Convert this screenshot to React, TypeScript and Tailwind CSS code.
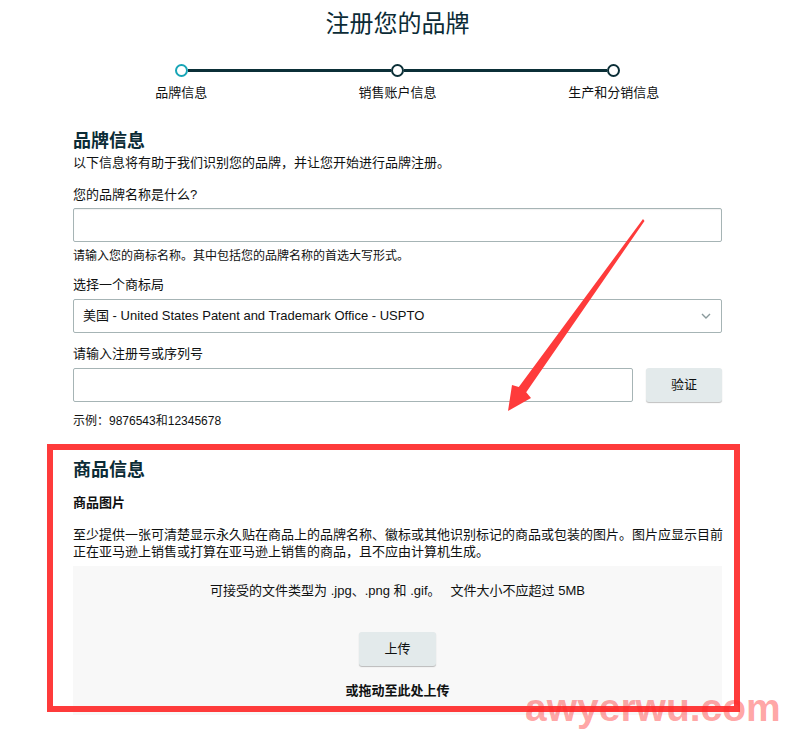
import React from "react";

const FONT = { fontFamily: '"Liberation Sans", "Noto Sans CJK SC", sans-serif' };

function Step({ label, pos }: { label: string; pos: "first" | "mid" | "last" }) {
  return (
    <div className="flex flex-col items-center">
      <div className="flex h-[16px] w-full items-center">
        <div className={`h-[3px] flex-1 ${pos === "first" ? "bg-transparent" : "bg-[#0b2f37]"}`} />
        <div
          className={`h-[13px] w-[13px] shrink-0 rounded-full border-[2.5px] bg-white ${
            pos === "first" ? "border-[#17a5b6]" : "border-[#0b2f37]"
          }`}
        />
        <div className={`h-[3px] flex-1 ${pos === "last" ? "bg-transparent" : "bg-[#0b2f37]"}`} />
      </div>
      <div className="mt-[6px] h-[18px] text-[13px] leading-[18px] text-[#0f1111]">{label}</div>
    </div>
  );
}

function Input() {
  return <div className="h-[34px] w-full rounded-[2px] border border-[#a6b4b5] bg-white shadow-[inset_0_1px_1px_rgba(0,0,0,0.06)]" />;
}

export default function App() {
  return (
    <div className="relative h-[739px] w-[801px] overflow-hidden bg-white" style={FONT}>
      <div className="ml-[73px] w-[649px]">
        <div className="h-[48px] text-center text-[24px] leading-[48px] text-[#0b2b36]">注册您的品牌</div>

        <div className="mt-[14px] grid grid-cols-3">
          <Step label="品牌信息" pos="first" />
          <Step label="销售账户信息" pos="mid" />
          <Step label="生产和分销信息" pos="last" />
        </div>

        <div className="mt-[27px] h-[24px] text-[18px] font-bold leading-[24px] text-[#0b2b36]">品牌信息</div>
        <div className="mt-[1px] h-[18px] text-[13px] leading-[18px] text-[#0f1111]">
          以下信息将有助于我们识别您的品牌，并让您开始进行品牌注册。
        </div>

        <div className="mt-[14px] h-[18px] text-[13px] leading-[18px] text-[#0f1111]">您的品牌名称是什么?</div>
        <div className="mt-[4px]">
          <Input />
        </div>
        <div className="mt-[5px] h-[18px] text-[12px] leading-[18px] text-[#0f1111]">
          请输入您的商标名称。其中包括您的品牌名称的首选大写形式。
        </div>

        <div className="mt-[11px] h-[18px] text-[13px] leading-[18px] text-[#0f1111]">选择一个商标局</div>
        <div className="mt-[5px] flex h-[34px] items-center justify-between rounded-[2px] border border-[#a6b4b5] bg-white pl-[9px] pr-[8px]">
          <span className="text-[13px] text-[#0f1111]">美国 - United States Patent and Trademark Office - USPTO</span>
          <svg width="12" height="8" viewBox="0 0 12 8" className="mr-[1px]">
            <path d="M2 2 L6 6 L10 2" fill="none" stroke="#8a9a9c" strokeWidth="1.4" />
          </svg>
        </div>

        <div className="mt-[12px] h-[18px] text-[13px] leading-[18px] text-[#0f1111]">请输入注册号或序列号</div>
        <div className="mt-[5px] flex gap-[13px]">
          <div className="h-[34px] w-[561px] rounded-[2px] border border-[#a6b4b5] bg-white" />
          <button className="h-[34px] w-[76px] rounded-[3px] bg-[#e3eaeb] text-[13px] text-[#0f1111] shadow-[0_1px_1px_rgba(0,0,0,0.25)]">
            验证
          </button>
        </div>
        <div className="mt-[10px] h-[18px] text-[12px] leading-[18px] text-[#0f1111]">示例：9876543和12345678</div>

        <div className="mt-[28px] h-[24px] text-[18px] font-bold leading-[24px] text-[#0b2b36]">商品信息</div>
        <div className="mt-[12px] h-[18px] text-[13px] font-bold leading-[18px] text-[#0f1111]">商品图片</div>
        <div className="mt-[14px] w-[651px] text-[13px] leading-[17px] text-[#0f1111]">
          至少提供一张可清楚显示永久贴在商品上的品牌名称、徽标或其他识别标记的商品或包装的图片。图片应显示目前正在亚马逊上销售或打算在亚马逊上销售的商品，且不应由计算机生成。
        </div>

        <div className="mt-[6px] flex h-[149px] flex-col items-center bg-[#f8f8f8] pt-[16px]">
          <div className="h-[18px] text-[13px] leading-[18px] text-[#0f1111]">
            <span>可接受的文件类型为 .jpg、.png 和 .gif。</span>
            <span className="ml-[10px]">文件大小不应超过 5MB</span>
          </div>
          <button className="mt-[32px] h-[34px] w-[77px] rounded-[3px] bg-[#e3eaeb] text-[13px] text-[#0f1111] shadow-[0_1px_1px_rgba(0,0,0,0.25)]">
            上传
          </button>
          <div className="mt-[16px] h-[18px] text-[13px] font-bold leading-[18px] text-[#0f1111]">或拖动至此处上传</div>
        </div>
      </div>

      {/* red annotation box */}
      <div className="pointer-events-none absolute left-[47px] top-[444px] h-[268px] w-[693px] border-[6px] border-[#fe3b3b]" />

      {/* red arrow */}
      <svg className="pointer-events-none absolute left-0 top-0" width="801" height="739">
        <polygon
          points="643,219 644.5,221 526.2,392.2 531,398 508,411 512,385 518.8,387"
          fill="#fe3b3b"
        />
      </svg>

      {/* watermark */}
      <div
        className="pointer-events-none absolute left-[525px] top-[686px] text-[39px] font-bold leading-[44px] text-[rgba(255,40,40,0.42)]"
        style={{ fontFamily: '"Liberation Sans", sans-serif' }}
      >
        awyerwu.com
      </div>
    </div>
  );
}
